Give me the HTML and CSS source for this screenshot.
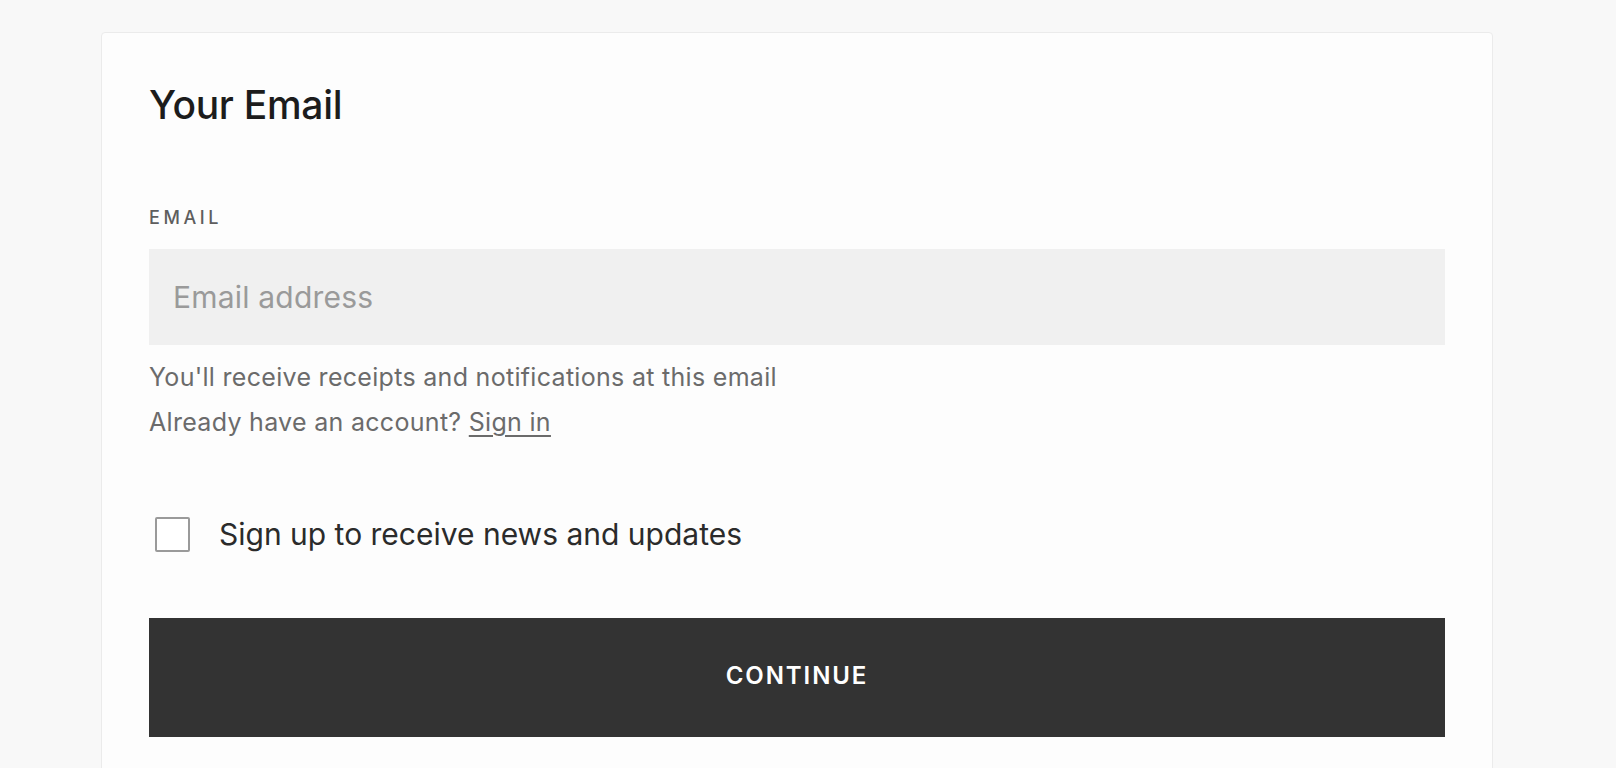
FILE: index.html
```html
<!DOCTYPE html>
<html lang="en">
<head>
    <meta charset="UTF-8">
    <meta name="viewport" content="width=device-width, initial-scale=1.0">
    <title>Your Email</title>
    <link rel="stylesheet" href="styles.css">
</head>
<body>

<section class="checkout-card">
    <h2 class="card-title">Your Email</h2>

    <form class="email-form" onsubmit="return false">
        <label class="field-label" for="email">Email</label>
        <input class="field-input" id="email" type="email" placeholder="Email address">

        <div class="field-help">
            <p>You'll receive receipts and notifications at this email</p>
            <p>Already have an account? <a href="#">Sign in</a></p>
        </div>

        <label class="newsletter">
            <input type="checkbox" class="newsletter-check">
            <span class="check-box"></span>
            <span class="newsletter-text">Sign up to receive news and updates</span>
        </label>

        <button class="continue-button" type="submit">Continue</button>
    </form>
</section>

</body>
</html>
```

FILE: styles.css
```css
body {
    font-family: Inter, "Liberation Sans", sans-serif;
    background-color: #f8f8f8;
    margin: 0;
    padding: 0;
}
.checkout-card {
    box-sizing: border-box;
    width: 1392px;
    margin: 32px 0 0 101px;
    padding: 50px 47px 40px;
    background-color: #fdfdfd;
    border: 1px solid #ebebeb;
    border-radius: 4px;
}
.card-title {
    margin: 0;
    font-size: 39px;
    line-height: 44px;
    font-weight: 500;
    color: #1c1c1c;
    letter-spacing: -0.3px;
}
.email-form {
    display: flex;
    flex-direction: column;
}
.field-label {
    margin-top: 81px;
    font-size: 18px;
    line-height: 20px;
    font-weight: 500;
    text-transform: uppercase;
    letter-spacing: 0.2em;
    color: #5e5e5e;
}
.field-input {
    box-sizing: border-box;
    height: 96px;
    margin-top: 21px;
    padding: 0 24px;
    border: none;
    background-color: #f0f0f0;
    font-family: inherit;
    font-size: 30px;
    letter-spacing: 0.2px;
    color: #333;
    outline: none;
}
.field-input::placeholder {
    color: #9a9a9a;
}
.field-help {
    margin-top: 10px;
    font-size: 25px;
    line-height: 45px;
    letter-spacing: 0.3px;
    color: #6b6b6b;
}
.field-help p {
    margin: 0;
}
.field-help a {
    color: #6b6b6b;
    text-decoration: underline;
    text-underline-offset: 4px;
}
/* Newsletter checkbox */
.newsletter {
    display: flex;
    align-items: center;
    margin-top: 72px;
    padding-left: 6px;
    cursor: pointer;
}
.newsletter-check {
    display: none;
}
.check-box {
    box-sizing: border-box;
    width: 35px;
    height: 35px;
    border: 2px solid #9a9a9a;
    border-radius: 2px;
    background-color: #fff;
}
.newsletter-text {
    margin-left: 29px;
    font-size: 30px;
    line-height: 35px;
    color: #2b2b2b;
}
.continue-button {
    height: 119px;
    margin-top: 66px;
    padding-bottom: 6px;
    border: none;
    background-color: #333;
    color: #fff;
    font-family: inherit;
    font-size: 24px;
    font-weight: 600;
    text-transform: uppercase;
    letter-spacing: 0.08em;
    cursor: pointer;
}
```
